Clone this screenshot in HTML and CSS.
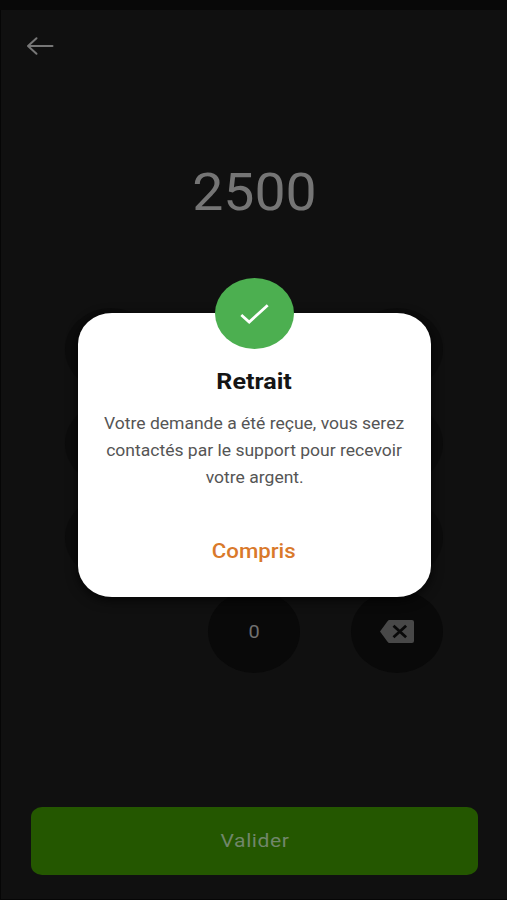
FILE: index.html
```html
<!DOCTYPE html>
<html lang="fr">
<head>
<meta charset="utf-8">
<title>Retrait</title>
<link rel="stylesheet" href="styles.css">
</head>
<body>
<div class="status"></div>
<main class="screen">
  <header class="top">
    <svg class="back" viewBox="0 0 28 20"><path d="M2 10H26.500M10.500 2.200L2 10l8.500 7.800"/></svg>
  </header>
  <div class="amount"><span class="wide">2500</span></div>
  <div class="keypad">
    <i class="key"></i><i class="key"></i><i class="key"></i>
    <i class="key"></i><i class="key"></i><i class="key"></i>
    <i class="key"></i><i class="key"></i><i class="key"></i>
    <i></i>
    <div class="key"><span class="wide">0</span></div>
    <div class="key">
      <svg class="erase" viewBox="0 0 34 23"><path class="erase-body" d="M9.500 0H32a2 2 0 0 1 2 2V21a2 2 0 0 1-2 2H9.500Q8.300 23 7.500 21.800L0 11.500 7.500 1.200Q8.300 0 9.500 0Z"/><path class="erase-x" d="M13.500 5.800l12.600 11.400M26.100 5.800L13.500 17.200"/></svg>
    </div>
  </div>
  <div class="validate"><span class="wide">Valider</span></div>
</main>
<section class="dialog">
  <div class="badge"><svg class="check" viewBox="0 0 29 20"><path d="M1.300 11l7.900 7L27.700 1.300"/></svg></div>
  <h1><span class="wide">Retrait</span></h1>
  <p><span class="wide">Votre demande a été reçue, vous serez</span><span class="wide">contactés par le support pour recevoir</span><span class="wide">votre argent.</span></p>
  <div class="confirm"><span class="wide">Compris</span></div>
</section>
</body>
</html>
```
FILE: styles.css
```css
* { box-sizing: border-box; }
body {
  margin: 0;
  height: 900px;
  overflow: hidden;
  background: #060606;
  font-family: Roboto, sans-serif;
  position: relative;
}
svg { display: block; }
.wide { display: inline-block; transform: scaleX(1.11); white-space: nowrap; }
.status { height: 10px; background: #080808; }
.screen {
  height: 889px;
  margin-left: 1px;
  padding: 26px 29px 0;
  background: #101010;
}
.back { width: 28px; height: 20px; margin-left: -4px; fill: none; stroke: #777; stroke-width: 2; stroke-linecap: round; stroke-linejoin: round; }
.amount { margin-top: 107px; height: 60px; line-height: 60px; text-align: center; font-size: 52px; color: #757575; }
.amount .wide { transform: scaleX(1.065); }
.keypad {
  margin: 85px 0 0 35px;
  display: grid;
  grid-template-columns: repeat(3, 92px);
  grid-auto-rows: 83px;
  gap: 11px 51px;
}
.key { display: flex; align-items: center; justify-content: center; border-radius: 50%; background: #090909; color: #707070; font-size: 18px; }
i.key { background: #0c0c0c; }
.erase { width: 34px; height: 23px; }
.erase-body { fill: #484848; }
.erase-x { fill: none; stroke: #090909; stroke-width: 2.8; }
.validate {
  margin: 134px 0 0 1px;
  height: 68px;
  border-radius: 11px / 10px;
  background: #245700;
  color: #71866a;
  font-size: 19px;
  letter-spacing: .5px;
  line-height: 68px;
  text-align: center;
}
.dialog {
  position: absolute;
  left: 78px;
  top: 313px;
  width: 353px;
  height: 284px;
  border-radius: 34px / 31px;
  background: #fff;
  box-shadow: 0 3px 12px rgba(0, 0, 0, .75);
  text-align: center;
}
.badge {
  width: 79px;
  height: 71px;
  margin: -35px auto 0;
  display: flex;
  align-items: center;
  justify-content: center;
  border-radius: 50%;
  background: #4caf50;
}
.check { width: 29px; height: 20px; fill: none; stroke: #fff; stroke-width: 2.8; }
h1 { margin: 18px 0 0; height: 30px; line-height: 30px; font-size: 22px; font-weight: 700; color: #151515; }
h1 .wide { transform: scaleX(1.14); }
p { margin: 14px 0 0; display: flex; flex-direction: column; align-items: center; font-size: 16px; line-height: 26.800px; color: #555; }
p .wide { transform: scaleX(1.095); }
.confirm { margin: 44.400px 2px 0 0; height: 30px; line-height: 30px; font-size: 20px; font-weight: 500; color: #d9792b; }
```
